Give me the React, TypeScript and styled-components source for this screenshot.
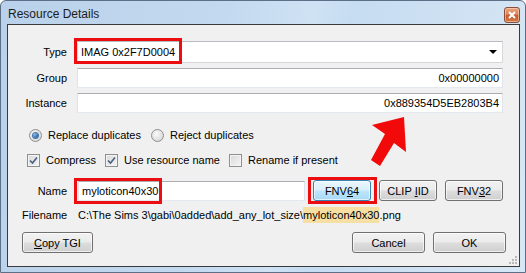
import React from 'react'
import styled, { createGlobalStyle, css } from 'styled-components'

const GlobalStyle = createGlobalStyle`
  html, body {
    margin: 0;
    padding: 0;
    background: #ffffff;
  }
  body {
    font-family: 'Liberation Sans', Arial, sans-serif;
    font-size: 11px;
    color: #000;
  }
`

const Window = styled.div`
  width: 526px;
  height: 273px;
  box-sizing: border-box;
  border: 1px solid #5d6f86;
  border-radius: 6px 6px 0 0;
  padding: 0 5px 5px 6px;
  display: flex;
  flex-direction: column;
  background: linear-gradient(
    100deg,
    #b9d1ea 0%,
    #c3d9ef 40%,
    #cfe2f4 55%,
    #c6dcf1 62%,
    #d8e7f5 100%
  );
`

const TitleBar = styled.div`
  height: 23px;
  display: flex;
  align-items: center;
  justify-content: space-between;
`

const Title = styled.div`
  font-size: 12px;
  padding-left: 1px;
  padding-top: 2px;
  color: #1b1b1b;
`

const CloseButton = styled.div`
  width: 16px;
  height: 16px;
  box-sizing: border-box;
  margin-top: 4px;
  border: 1px solid #8b4e37;
  border-radius: 3px;
  background: linear-gradient(#eba47c 0%, #dd845a 45%, #c4582c 55%, #d57a48 100%);
  box-shadow: inset 0 0 0 1px rgba(255, 230, 210, 0.5);
  display: flex;
  align-items: center;
  justify-content: center;
`

const Client = styled.div`
  position: relative;
  flex: 1;
  border: 1px solid #3a3a3a;
  background: #f0f0f0;
  padding: 15px 16px 0 14px;
  display: flex;
  flex-direction: column;
`

const FieldRow = styled.div<{ $top: number; $h: number }>`
  display: grid;
  grid-template-columns: 45px 1fr;
  column-gap: 10px;
  align-items: center;
  margin-top: ${p => p.$top}px;
  height: ${p => p.$h}px;
`

const Label = styled.div`
  text-align: right;
  white-space: nowrap;
`

const TextBox = styled.div<{ $right?: boolean }>`
  position: relative;
  height: 100%;
  box-sizing: border-box;
  background: #fff;
  border: 1px solid #e2e3ea;
  border-top-color: #abadb3;
  border-bottom-color: #e3e9ef;
  display: flex;
  align-items: center;
  padding: 0 3px;
  justify-content: ${p => (p.$right ? 'flex-end' : 'flex-start')};
  white-space: nowrap;
`

const ComboBox = styled(TextBox)`
  justify-content: space-between;
  padding: 0 4px 0 3px;
  border-color: #d6d8dc;
  border-top-color: #b8bbc0;
`

const DropArrow = styled.div`
  width: 0;
  height: 0;
  border-left: 4px solid transparent;
  border-right: 4px solid transparent;
  border-top: 4px solid #000;
  margin-right: 1px;
`

const RedMark = styled.div<{ $l: number; $t: number; $w: number; $h: number }>`
  position: absolute;
  left: ${p => p.$l}px;
  top: ${p => p.$t}px;
  width: ${p => p.$w}px;
  height: ${p => p.$h}px;
  box-sizing: border-box;
  border: 3px solid #ec0d10;
  pointer-events: none;
`

const OptionRow = styled.div<{ $top: number; $pad: number }>`
  display: flex;
  align-items: center;
  height: 16px;
  margin-top: ${p => p.$top}px;
  padding-left: ${p => p.$pad}px;
`

const Option = styled.div<{ $w?: number }>`
  display: flex;
  align-items: center;
  gap: 6px;
  white-space: nowrap;
  width: ${p => (p.$w ? `${p.$w}px` : 'auto')};
`

const RadioCircle = styled.div<{ $on?: boolean }>`
  width: 13px;
  height: 13px;
  box-sizing: border-box;
  border-radius: 50%;
  border: 1px solid #8f8f8f;
  background: radial-gradient(circle at 40% 35%, #fafafa 0%, #dcdcdc 70%, #cfcfcf 100%);
  display: flex;
  align-items: center;
  justify-content: center;
  &::after {
    content: '';
    display: ${p => (p.$on ? 'block' : 'none')};
    width: 5px;
    height: 5px;
    border-radius: 50%;
    background: radial-gradient(circle at 35% 35%, #8ac0ea 0%, #2e6fb0 60%, #1e4f86 100%);
    box-shadow: 0 0 0 1px #4b77a8;
  }
`

const CheckBox = styled.div`
  width: 13px;
  height: 13px;
  box-sizing: border-box;
  border: 1px solid #8e8f8f;
  background: linear-gradient(135deg, #d9d9d9 0%, #f4f4f4 100%);
  box-shadow: inset 0 0 0 1px #f4f4f4;
  display: flex;
  align-items: center;
  justify-content: center;
`

const NameRow = styled.div`
  display: grid;
  grid-template-columns: 45px 1fr auto;
  column-gap: 10px;
  align-items: center;
  margin-top: 12px;
  height: 21px;
`

const NameField = styled(TextBox)`
  height: 20px;
  margin-left: 1px;
`

const ButtonGroup = styled.div`
  display: flex;
  gap: 8px;
  margin-left: -2px;
`

const buttonFace = css`
  background: linear-gradient(#f2f2f2 0%, #ebebeb 48%, #dddddd 52%, #cfcfcf 100%);
  border: 1px solid #707070;
`

const focusFace = css`
  background: linear-gradient(#eaf6fd 0%, #d9f0fc 48%, #bee6fd 52%, #a7d9f5 100%);
  border: 1px solid #3c7fb1;
`

const Button = styled.div<{ $w: number; $focus?: boolean }>`
  position: relative;
  width: ${p => p.$w}px;
  height: 21px;
  box-sizing: border-box;
  border-radius: 3px;
  ${p => (p.$focus ? focusFace : buttonFace)}
  box-shadow: inset 0 0 0 1px rgba(255, 255, 255, 0.65);
  display: flex;
  align-items: center;
  justify-content: center;
  font-size: 11px;
  white-space: pre;
  u {
    text-decoration-thickness: 1px;
    text-underline-offset: 1px;
  }
`

const FileRow = styled.div`
  display: grid;
  grid-template-columns: 45px 1fr;
  column-gap: 10px;
  align-items: center;
  height: 17px;
  margin-top: 5px;
`

const FileValue = styled.div`
  white-space: nowrap;
  padding-left: 1px;
`

const Highlight = styled.span`
  background: #f5dfa2;
  padding: 2px 0;
`

const BottomRow = styled.div`
  display: flex;
  align-items: center;
  margin-top: 9px;
  margin-right: -3px;
`

const Spacer = styled.div`
  flex: 1;
`

const BottomRight = styled.div`
  display: flex;
  gap: 8px;
`

const ArrowMark = styled.svg`
  position: absolute;
  left: 344px;
  top: 87px;
  pointer-events: none;
`

const SizeGrip = styled.svg`
  position: absolute;
  right: 1px;
  bottom: 1px;
`

const CheckMark = () => (
  <svg width="9" height="9" viewBox="0 0 9 9">
    <path d="M1 4.5 L3.5 7 L8 1.5" fill="none" stroke="#4a5f80" strokeWidth="1.6" />
  </svg>
)

type OptProps = { label: string; checked?: boolean; w?: number }

const Radio: React.FC<OptProps> = ({ label, checked, w }) => (
  <Option $w={w}>
    <RadioCircle $on={checked} />
    <span>{label}</span>
  </Option>
)

const Check: React.FC<OptProps> = ({ label, checked, w }) => (
  <Option $w={w}>
    <CheckBox>{checked && <CheckMark />}</CheckBox>
    <span>{label}</span>
  </Option>
)

const App: React.FC = () => (
  <>
    <GlobalStyle />
    <Window>
      <TitleBar>
        <Title>Resource Details</Title>
        <CloseButton>
          <svg width="8" height="8" viewBox="0 0 8 8">
            <path d="M1 1 L7 7 M7 1 L1 7" stroke="#fff" strokeWidth="2" />
          </svg>
        </CloseButton>
      </TitleBar>
      <Client>
        <FieldRow $top={1} $h={22}>
          <Label>Type</Label>
          <ComboBox>
            <span>IMAG 0x2F7D0004</span>
            <DropArrow />
            <RedMark $l={-4} $t={-4} $w={108} $h={26} />
          </ComboBox>
        </FieldRow>
        <FieldRow $top={5} $h={20}>
          <Label>Group</Label>
          <TextBox $right>0x00000000</TextBox>
        </FieldRow>
        <FieldRow $top={5} $h={20}>
          <Label>Instance</Label>
          <TextBox $right>0x889354D5EB2803B4</TextBox>
        </FieldRow>

        <OptionRow $top={14} $pad={7}>
          <Radio label="Replace duplicates" checked w={122} />
          <Radio label="Reject duplicates" />
        </OptionRow>
        <OptionRow $top={9} $pad={5}>
          <Check label="Compress" checked w={78} />
          <Check label="Use resource name" checked w={124} />
          <Check label="Rename if present" />
        </OptionRow>

        <NameRow>
          <Label>Name</Label>
          <NameField>
            <span>myloticon40x30</span>
            <RedMark $l={-5} $t={-4} $w={88} $h={26} />
          </NameField>
          <ButtonGroup>
            <Button $w={58} $focus>
              <span>
                FNV<u>6</u>4
              </span>
              <RedMark $l={-6} $t={-4} $w={69} $h={27} />
            </Button>
            <Button $w={58}>
              <span>
                CLIP <u>I</u>ID
              </span>
            </Button>
            <Button $w={58}>
              <span>
                FNV<u>3</u>2
              </span>
            </Button>
          </ButtonGroup>
        </NameRow>

        <FileRow>
          <Label>Filename</Label>
          <FileValue>
            C:\The Sims 3\gabi\0added\add_any_lot_size\
            <Highlight>myloticon40x30</Highlight>.png
          </FileValue>
        </FileRow>

        <BottomRow>
          <Button $w={71}>
            <span>
              <u>C</u>opy TGI
            </span>
          </Button>
          <Spacer />
          <BottomRight>
            <Button $w={73}>Cancel</Button>
            <Button $w={73}>OK</Button>
          </BottomRight>
        </BottomRow>

        <ArrowMark width="64" height="64" viewBox="0 0 64 64">
          <polygon
            points="52,5 20,13 33,22 19,48 28,54 42,31 54,40"
            fill="#f20a0a"
          />
        </ArrowMark>

        <SizeGrip width="11" height="11" viewBox="0 0 11 11">
          {[
            [8, 2],
            [5, 5],
            [8, 5],
            [2, 8],
            [5, 8],
            [8, 8]
          ].map(([x, y]) => (
            <rect key={`${x}-${y}`} x={x} y={y} width="2" height="2" fill="#b8b8b8" />
          ))}
        </SizeGrip>
      </Client>
    </Window>
  </>
)

export default App
